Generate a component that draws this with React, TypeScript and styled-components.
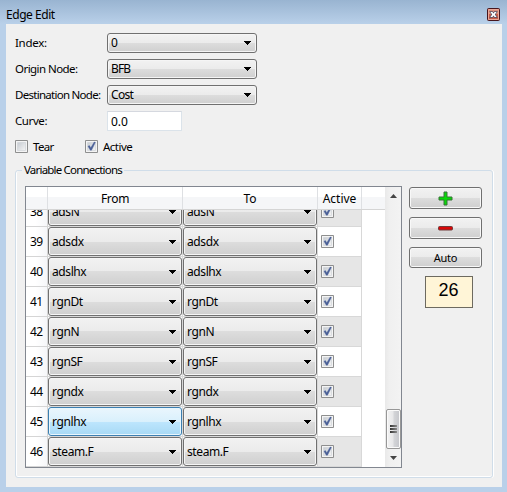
import React from "react";
import styled, { createGlobalStyle, css } from "styled-components";

const Global = createGlobalStyle`
  * { box-sizing: border-box; }
  body { margin: 0; overflow: hidden; }
`;

const uiFont = css`font-family: "Noto Sans", "Open Sans", sans-serif;`;

const Window = styled.div`
  width: 507px;
  height: 492px;
  padding: 0 5px 5px 6px;
  display: flex;
  flex-direction: column;
  background: linear-gradient(#99b4d1 0, #b9d0e9 24px, #b9d0e9 100%);
  color: #000;
  font-size: 12px;
  ${uiFont}
`;

const TitleBar = styled.header`
  height: 24px;
  flex: none;
  padding: 7px 2px 0 0;
  display: flex;
  justify-content: space-between;
`;

const CloseIcon = styled.svg`
  display: block;
  margin-top: 1px;
`;

const Label = styled.span<{ $track?: number; $size?: number }>`
  display: block;
  white-space: nowrap;
  line-height: 16px;
  font-size: ${(p) => p.$size ?? 12}px;
  letter-spacing: ${(p) => p.$track ?? 0}px;
`;

const Panel = styled.main`
  flex: 1;
  min-height: 0;
  background: #f0f0f0;
  padding: 9px 9px 0;
`;

const Form = styled.div`
  display: flex;
  flex-direction: column;
  gap: 6px;
`;

const Field = styled.div`
  height: 20px;
  display: grid;
  grid-template-columns: 92px auto;
  align-items: center;
  justify-content: start;
`;

const Combo = styled.div<{ $w: number; $h: number; $hot?: boolean }>`
  width: ${(p) => p.$w}px;
  height: ${(p) => p.$h}px;
  flex: none;
  display: flex;
  align-items: center;
  justify-content: space-between;
  padding: 0 5px 0 3px;
  border: 1px solid ${(p) => (p.$hot ? "#3c7fb1" : "#707070")};
  border-radius: 3px;
  box-shadow: inset 0 0 0 1px ${(p) => (p.$hot ? "#e8f6fd" : "#f5f5f5")};
  background: ${(p) =>
    p.$hot
      ? "linear-gradient(#eaf6fd 0, #d9f0fc 50%, #bee6fd 50%, #a7d9f5 100%)"
      : "linear-gradient(#f2f2f2 0, #ebebeb 50%, #dddddd 50%, #cfcfcf 100%)"};
`;

const TextInput = styled.div`
  width: 75px;
  height: 20px;
  padding: 2px 3px 0;
  border: 1px solid #dbe3ea;
  border-top-color: #d5d8df;
  background: #fff;
`;

const Checks = styled.div`
  height: 13px;
  margin-top: 9px;
  display: flex;
  align-items: center;
`;

const CheckItem = styled.div<{ $w: number }>`
  width: ${(p) => p.$w}px;
  display: flex;
  align-items: center;
  gap: 5px;
`;

const Group = styled.fieldset`
  height: 316px;
  width: 478px;
  margin: 9px 0 0;
  padding: 0;
  min-width: 0;
  border: 1px solid #d0dde9;
  border-radius: 3px;
  box-shadow: inset 0 -1px #fff, inset 1px 0 #fff, 1px 0 #fff;
`;

const Legend = styled.legend`
  margin-left: 6px;
  padding: 0 2px;
  height: 16px;
`;

const GroupBody = styled.div`
  display: flex;
  gap: 7px;
  padding: 8px 0 0 9px;
`;

const Table = styled.div`
  width: 377px;
  height: 282px;
  border: 1px solid #828790;
  background: #fff;
  display: flex;
`;

const Grid = styled.div`
  width: 359px;
  height: 280px;
  display: flex;
  flex-direction: column;
`;

const columns = css`
  display: grid;
  grid-template-columns: 22px 135px 135px 44px 1fr;
`;

const HeaderRow = styled.div`
  ${columns}
  height: 23px;
  flex: none;
  border-bottom: 1px solid #d5d5d5;
  background: linear-gradient(#fff 0, #fff 45%, #f5f6f8 45%, #f5f6f8 100%);
`;

const HeaderCell = styled.div`
  display: flex;
  justify-content: center;
  padding-top: 4px;
  border-right: 1px solid #dee0e3;
  &:last-child { border-right: 0; }
`;

const Rows = styled.div`
  flex: 1;
  min-height: 0;
  overflow: hidden;
  display: flex;
  flex-direction: column;
  justify-content: flex-end;
`;

const Row = styled.div`
  ${columns}
  height: 30px;
  flex: none;
`;

const RowHeader = styled.div`
  padding: 7px 0 0 4px;
  border-right: 1px solid #d5d5d5;
  border-bottom: 1px solid #d5d5d5;
  background: linear-gradient(90deg, #fff 45%, #f6f7f9);
`;

const ComboCell = styled.div`
  border-right: 1px solid #d8d8d8;
  border-bottom: 1px solid #d8d8d8;
`;

const CheckCell = styled.div<{ $alt: boolean }>`
  padding: 8px 0 0 3px;
  border-right: 1px solid #d8d8d8;
  border-bottom: 1px solid #d8d8d8;
  background: ${(p) => (p.$alt ? "#e6e6e6" : "#fff")};
`;

const Scrollbar = styled.div`
  width: 16px;
  display: flex;
  flex-direction: column;
  align-items: center;
  justify-content: space-between;
  padding: 7px 0 7px;
  background: linear-gradient(90deg, #e9e9e9, #f0f0f0 30%, #f3f3f3);
`;

const ThumbSpace = styled.div`
  flex: 1;
  display: flex;
  align-items: flex-end;
  padding-bottom: 7px;
`;

const Thumb = styled.div`
  width: 15px;
  height: 40px;
  border: 1px solid #979797;
  border-radius: 2px;
  box-shadow: inset 0 0 0 1px #fafafa;
  background: linear-gradient(90deg, #f3f3f3 0, #e6e6e8 48%, #d4d5d8 52%, #c4c5ca 100%);
  display: flex;
  flex-direction: column;
  align-items: center;
  justify-content: center;
  gap: 1px;
`;

const Grip = styled.i`
  width: 7px;
  height: 2px;
  background: linear-gradient(90deg, #333, #8b8b8b);
`;

const Side = styled.div`
  width: 73px;
  padding-top: 1px;
  display: flex;
  flex-direction: column;
  align-items: center;
`;

const Button = styled.div<{ $h?: number }>`
  width: 73px;
  height: ${(p) => p.$h ?? 22}px;
  margin-bottom: 8px;
  display: flex;
  align-items: center;
  justify-content: center;
  border: 1px solid #707070;
  border-radius: 3px;
  box-shadow: inset 0 0 0 1px #f8f8f8;
  background: linear-gradient(#f2f2f2 0, #ebebeb 50%, #dddddd 50%, #cfcfcf 100%);
`;

const Callout = styled.div`
  width: 48px;
  height: 32px;
  margin-left: 6px;
  border: 1px solid #6d6a60;
  background: #fff5d7;
  text-align: center;
  font: 18px/27px "Liberation Sans", Arial, sans-serif;
`;

const Arrow = () => (
  <svg width="7" height="4" viewBox="0 0 7 4" shapeRendering="crispEdges">
    <path d="M0 0h7v1H6v1H5v1H4v1H3V3H2V2H1V1H0z" fill="#000" />
  </svg>
);

const ScrollArrow = ({ up }: { up?: boolean }) => (
  <svg width="7" height="4" viewBox="0 0 7 4">
    <path d={up ? "M3.5 0 7 4H0z" : "M0 0h7L3.5 4z"} fill="#444" />
  </svg>
);

const CheckBox = ({ on }: { on?: boolean }) => (
  <svg width="13" height="13" viewBox="0 0 13 13" display="block">
    <defs>
      <linearGradient id="boxFill" x1="0" y1="0" x2="1" y2="1">
        <stop offset="0" stopColor="#c6cbd1" />
        <stop offset="1" stopColor="#f6f6f6" />
      </linearGradient>
    </defs>
    <path d="M.5.5h12v12H.5z" fill="#f4f4f4" stroke="#8e8f8f" />
    <path d="M2.5 2.5h8v8h-8z" fill="url(#boxFill)" stroke="#d0d4d8" strokeOpacity=".7" />
    {on && <path d="M3 6.3 4.4 5.6 5.8 7.8 9.2 2 10.4 2.3 6.5 10.2 5.3 10.2z" fill="#4a5f97" stroke="#4a5f97" strokeWidth=".4" />}
  </svg>
);

const Select = ({ text, w, h, hot, track }: { text: string; w: number; h: number; hot?: boolean; track?: number }) => (
  <Combo $w={w} $h={h} $hot={hot}>
    <Label $track={track}>{text}</Label>
    <Arrow />
  </Combo>
);

const connections = [
  [38, "adsN"], [39, "adsdx"], [40, "adslhx"], [41, "rgnDt"], [42, "rgnN"],
  [43, "rgnSF"], [44, "rgndx"], [45, "rgnlhx"], [46, "steam.F"],
] as const;

export default function App() {
  return (
    <>
      <Global />
      <Window>
        <TitleBar>
          <Label $track={-0.45}>Edge Edit</Label>
          <CloseIcon width="13" height="13" viewBox="0 0 13 13">
            <rect x=".5" y=".5" width="12" height="12" rx="1" fill="#c75b48" stroke="#47161d" />
            <path d="M1.5 1.5h10v10h-10z" fill="none" stroke="#eba898" />
            <path d="M2 2h9v4H2z" fill="#dc8f7d" />
            <path d="M3.4 4h2L6.5 5.4 7.6 4h2L7.8 6.5 9.6 9h-2L6.5 7.6 5.4 9h-2l1.8-2.5z" fill="#fff" stroke="#50556a" strokeWidth="1.3" paintOrder="stroke" />
          </CloseIcon>
        </TitleBar>
        <Panel>
          <Form>
            <Field><Label $size={11.5} $track={-0.3}>Index:</Label><Select text="0" w={150} h={20} /></Field>
            <Field><Label $size={11.5} $track={-0.55}>Origin Node:</Label><Select text="BFB" w={150} h={20} track={-0.9} /></Field>
            <Field><Label $size={11.5} $track={-0.72}>Destination Node:</Label><Select text="Cost" w={150} h={20} track={-0.7} /></Field>
            <Field><Label $size={11.5} $track={-0.4}>Curve:</Label><TextInput><Label>0.0</Label></TextInput></Field>
          </Form>
          <Checks>
            <CheckItem $w={70}><CheckBox /><Label $size={11.5} $track={-0.7}>Tear</Label></CheckItem>
            <CheckItem $w={70}><CheckBox on /><Label $size={11.5} $track={-0.5}>Active</Label></CheckItem>
          </Checks>
          <Group>
            <Legend><Label $size={11.5} $track={-0.8}>Variable Connections</Label></Legend>
            <GroupBody>
              <Table>
                <Grid>
                  <HeaderRow>
                    <HeaderCell />
                    <HeaderCell><Label $track={-0.3}>From</Label></HeaderCell>
                    <HeaderCell><Label>To</Label></HeaderCell>
                    <HeaderCell><Label>Active</Label></HeaderCell>
                    <HeaderCell />
                  </HeaderRow>
                  <Rows>
                    {connections.map(([n, name]) => (
                      <Row key={n}>
                        <RowHeader><Label $track={-0.6}>{n}</Label></RowHeader>
                        <ComboCell><Select text={name} w={134} h={29} hot={n === 45} track={-0.4} /></ComboCell>
                        <ComboCell><Select text={name} w={134} h={29} track={-0.4} /></ComboCell>
                        <CheckCell $alt={n % 2 === 0}><CheckBox on /></CheckCell>
                      </Row>
                    ))}
                  </Rows>
                </Grid>
                <Scrollbar>
                  <ScrollArrow up />
                  <ThumbSpace><Thumb><Grip /><Grip /><Grip /></Thumb></ThumbSpace>
                  <ScrollArrow />
                </Scrollbar>
              </Table>
              <Side>
                <Button>
                  <svg width="15" height="15" viewBox="0 0 15 15">
                    <path d="M6 1h3v5h5v3H9v5H6V9H1V6h5z" fill="#08d808" stroke="#397239" strokeLinejoin="round" />
                  </svg>
                </Button>
                <Button>
                  <svg width="15" height="5" viewBox="0 0 15 5">
                    <rect x=".5" y=".5" width="14" height="3.5" rx="1" fill="#d80808" stroke="#703b3b" />
                  </svg>
                </Button>
                <Button $h={21}><Label $size={11} $track={-0.2}>Auto</Label></Button>
                <Callout>26</Callout>
              </Side>
            </GroupBody>
          </Group>
        </Panel>
      </Window>
    </>
  );
}
